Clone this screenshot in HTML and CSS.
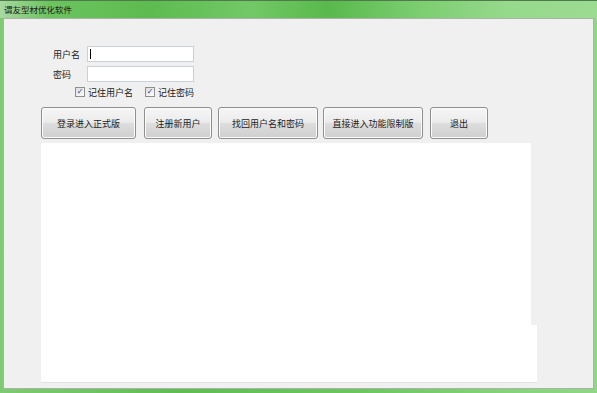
FILE: index.html
```html
<!DOCTYPE html>
<html lang="zh-CN">
<head>
    <meta charset="UTF-8">
    <title>谓友型材优化软件</title>
    <link rel="stylesheet" href="styles.css">
</head>
<body>
    <div class="window">
        <div class="title-bar">谓友型材优化软件</div>
        <div class="panel">
            <div class="field-row">
                <span class="field-label">用户名</span>
                <div class="text-box"><span class="caret"></span></div>
            </div>
            <div class="field-row second">
                <span class="field-label">密码</span>
                <div class="text-box"></div>
            </div>
            <div class="check-row">
                <label class="check"><span class="check-box">&#10003;</span>记住用户名</label>
                <label class="check"><span class="check-box">&#10003;</span>记住密码</label>
            </div>
            <div class="button-row">
                <button class="btn btn-login">登录进入正式版</button>
                <button class="btn btn-register">注册新用户</button>
                <button class="btn btn-recover">找回用户名和密码</button>
                <button class="btn btn-trial">直接进入功能限制版</button>
                <button class="btn btn-exit">退出</button>
            </div>
            <div class="notice"></div>
        </div>
    </div>
</body>
</html>
```

FILE: styles.css
```css
body {
    margin: 0;
    font-family: "Noto Sans CJK SC", "Liberation Sans", sans-serif;
    background-color: #ffffff;
}
.window {
    width: 597px;
    height: 393px;
    display: flex;
    flex-direction: column;
    background: linear-gradient(90deg, #7fca73 0%, #5fbd52 30%, #6cc660 60%, #86d27b 85%, #8fd685 100%);
    box-sizing: border-box;
    border-top: 1px solid #4f7a4a;
}
.title-bar {
    height: 17px;
    line-height: 16px;
    padding-left: 4px;
    font-size: 8.5px;
    color: #1c1c1c;
    background: linear-gradient(90deg, #a9d8a1 0%, #6cc45f 8%, #5dbb50 25%, #72c866 42%, #59b94c 55%, #7ccd70 70%, #96d98c 85%, #9cdb92 100%);
}
.panel {
    flex: 1;
    position: relative;
    display: flex;
    flex-direction: column;
    margin: 0 3px 4px 3px;
    padding-top: 27px;
    background-color: #f0f0f0;
    border: 1px solid #a9b3a8;
}
.field-row {
    display: flex;
    align-items: center;
    height: 16px;
    margin-left: 49px;
}
.field-row.second {
    margin-top: 4px;
}
.field-label {
    width: 34px;
    font-size: 9px;
    color: #222;
}
.text-box {
    width: 105px;
    height: 14px;
    background-color: #ffffff;
    border: 1px solid #c8d0da;
    display: flex;
    align-items: center;
}
.caret {
    width: 1px;
    height: 10px;
    margin-left: 2px;
    background-color: #000;
}
.check-row {
    display: flex;
    align-items: center;
    gap: 12px;
    height: 14px;
    margin: 3px 0 0 71px;
}
.check {
    display: flex;
    align-items: center;
    gap: 3px;
    font-size: 9px;
    color: #222;
}
.check-box {
    width: 8px;
    height: 8px;
    border: 1px solid #8e8f8f;
    background: linear-gradient(135deg, #dcdcdc, #ffffff);
    font-size: 8px;
    line-height: 8px;
    text-align: center;
    color: #2a3f8a;
    font-family: "DejaVu Sans", sans-serif;
}
.button-row {
    display: flex;
    margin: 8px 0 0 37px;
    height: 32px;
}
.btn {
    height: 32px;
    padding: 0;
    font-family: inherit;
    font-size: 9px;
    color: #222;
    border: 1px solid #8f8f8f;
    border-radius: 3px;
    background: linear-gradient(180deg, #f6f6f6 0%, #ebebeb 48%, #dddddd 52%, #cfcfcf 100%);
    box-shadow: inset 0 0 0 1px #fbfbfb;
}
.btn-login { width: 95px; }
.btn-register { width: 68px; margin-left: 8px; }
.btn-recover { width: 100px; margin-left: 6px; }
.btn-trial { width: 100px; margin-left: 5px; }
.btn-exit { width: 58px; margin-left: 7px; }
.notice {
    flex: 1;
    position: relative;
    width: 490px;
    margin: 4px 0 5px 37px;
    background-color: #ffffff;
    border-bottom: 1px solid #e2e2e2;
}
.notice::after {
    content: "";
    position: absolute;
    left: 100%;
    bottom: -1px;
    width: 6px;
    height: 57px;
    background-color: #ffffff;
    border-bottom: 1px solid #e2e2e2;
}
```
